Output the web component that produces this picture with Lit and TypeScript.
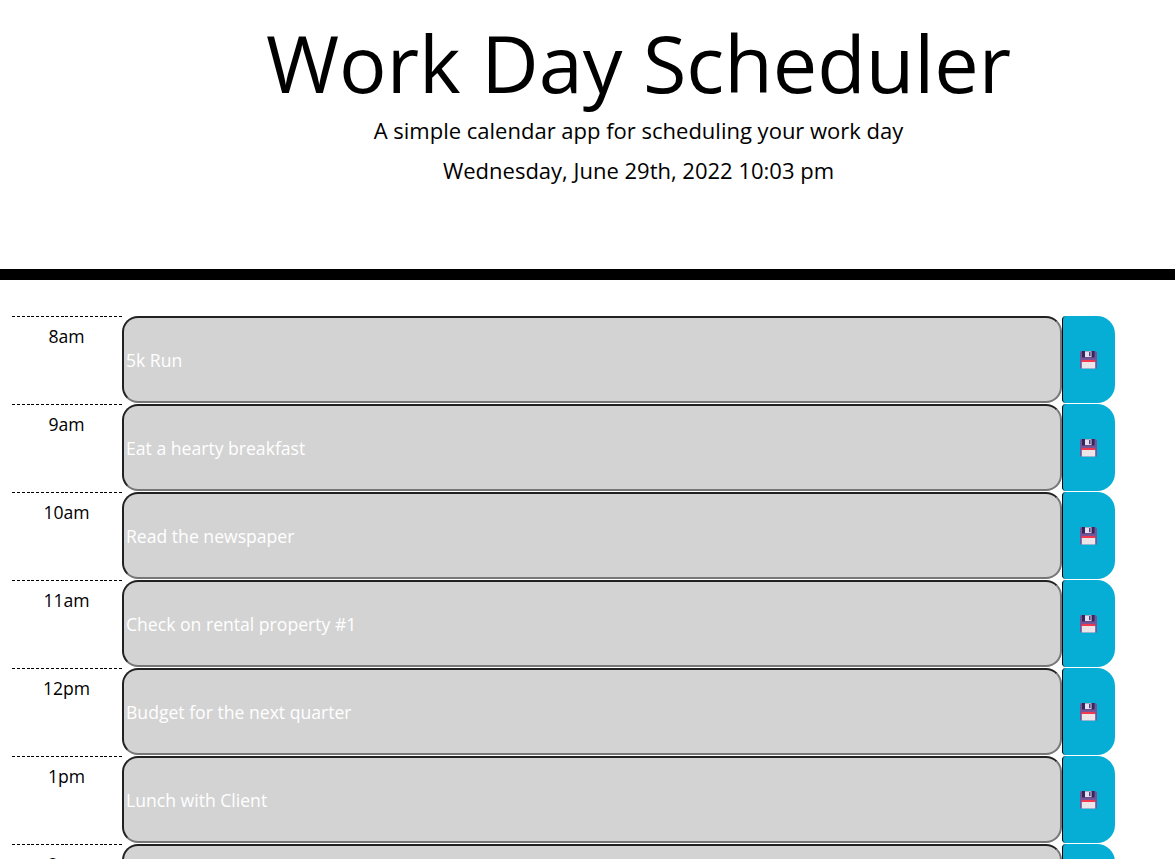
import { LitElement, html, css } from "lit";
import { customElement, property } from "lit/decorators.js";

@customElement("save-icon")
class SaveIcon extends LitElement {
  static styles = css`
    :host { display: block; width: 17px; height: 18px; }
    svg { display: block; }
  `;
  render() {
    return html`<svg width="17" height="18" viewBox="0 0 17 18">
      <path d="M1 0H15.5L17 1.5V17.5H1L0 16.5V1Z" fill="#74559a"/>
      <rect x="2" y="0" width="12.5" height="6.5" fill="#33265a"/>
      <rect x="5" y="0.3" width="6.5" height="5.8" fill="#e6e0ee"/>
      <rect x="9" y="1" width="1.6" height="4.2" fill="#51437b"/>
      <rect x="1.8" y="9" width="13.4" height="2.2" fill="#f13b4d"/>
      <rect x="1.8" y="11" width="13.4" height="6.5" fill="#ece6e9"/>
    </svg>`;
  }
}

@customElement("time-block")
class TimeBlock extends LitElement {
  @property() hour = "";
  @property() task = "";
  static styles = css`
    :host { display: flex; height: 88px; }
    .hour {
      box-sizing: border-box; width: 110px; padding: 7px 1px 0 0; text-align: center;
      font-size: 17.6px; line-height: 27px; color: #000;
      background: repeating-linear-gradient(90deg, #000 0 3px, transparent 3px 4.863px) 0 0 / 100% 1px no-repeat;
    }
    .task {
      box-sizing: border-box; width: 940px; height: 87px; padding: 1px 2px 0;
      border: 2px solid; border-color: #212121 #767676 #767676 #212121; border-radius: 16px;
      background: #d3d3d3; color: #fff; font-size: 17.6px; line-height: 83px; white-space: nowrap;
    }
    .save {
      box-sizing: border-box; width: 53px; height: 87px; padding: 0 2px 0 0; display: flex;
      align-items: center; justify-content: center;
      border: 0 solid #000; border-left-width: 1px; border-radius: 4px 18px 18px 4px; background: #06aed5;
    }
  `;
  render() {
    return html`<div class="hour">${this.hour}</div>
      <div class="task">${this.task}</div>
      <button class="save" aria-label="Save"><save-icon></save-icon></button>`;
  }
}

@customElement("app-root")
class AppRoot extends LitElement {
  static styles = css`
    :host {
      display: block; height: 859px; overflow: hidden; background: #fff; color: #000;
      font-family: "Open Sans", sans-serif;
    }
    .header {
      box-sizing: border-box; height: 280px; padding: 15px 0 0 102px;
      border-bottom: 11px solid #000; text-align: center;
    }
    .title { margin: 0; font-size: 79.2px; line-height: 95px; font-weight: 400; }
    .lead { margin: 0 0 6px; font-size: 22px; line-height: 34px; padding-top: 3px; }
    .day { margin: 0; font-size: 22px; line-height: 34px; }
    .blocks { padding: 36px 0 0 12px; }
  `;
  private items = [
    ["8am", "5k Run"],
    ["9am", "Eat a hearty breakfast"],
    ["10am", "Read the newspaper"],
    ["11am", "Check on rental property #1"],
    ["12pm", "Budget for the next quarter"],
    ["1pm", "Lunch with Client"],
    ["2pm", ""],
  ];
  render() {
    return html`<header class="header">
        <h1 class="title">Work Day Scheduler</h1>
        <p class="lead">A simple calendar app for scheduling your work day</p>
        <p class="day">Wednesday, June 29th, 2022 10:03 pm</p>
      </header>
      <main class="blocks">
        ${this.items.map(([h, t]) => html`<time-block .hour=${h} .task=${t}></time-block>`)}
      </main>`;
  }
}
